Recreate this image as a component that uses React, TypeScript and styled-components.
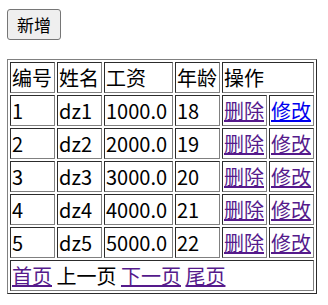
import React from 'react';
import styled, { createGlobalStyle } from 'styled-components';

const GlobalStyle = createGlobalStyle`
  body {
    margin: 0;
    background: #fff;
    font-family: "Noto Sans CJK SC", "Noto Sans", sans-serif;
    color: #000;
  }
`;

const Page = styled.div`
  padding: 9px 7px;
`;

const AddButton = styled.button`
  display: block;
  height: 31px;
  padding: 0 9px;
  font-family: "Noto Sans CJK SC", sans-serif;
  font-size: 17px;
  line-height: 22px;
  color: #000;
  background: #efefef;
  border: 1px solid #767676;
  border-radius: 3px;
`;

const Table = styled.table`
  margin-top: 19px;
  border: 1px outset gray;
  border-spacing: 2px;
  font-size: 20px;
  line-height: 27px;
`;

const Cell = styled.td<{ $w?: number }>`
  width: ${(p) => (p.$w ? `${p.$w}px` : 'auto')};
  padding: 1px;
  border: 1px inset gray;
  white-space: nowrap;
  vertical-align: middle;
`;

const Link = styled.a<{ $visited?: boolean }>`
  color: ${(p) => (p.$visited ? '#551a8b' : '#0000ee')};
  text-decoration: underline;
  cursor: pointer;
`;

const rows = [
  { id: 1, name: 'dz1', salary: '1000.0', age: 18 },
  { id: 2, name: 'dz2', salary: '2000.0', age: 19 },
  { id: 3, name: 'dz3', salary: '3000.0', age: 20 },
  { id: 4, name: 'dz4', salary: '4000.0', age: 21 },
  { id: 5, name: 'dz5', salary: '5000.0', age: 22 },
];

const App = () => (
  <Page>
    <GlobalStyle />
    <AddButton>新增</AddButton>
    <Table>
      <tbody>
        <tr>
          <Cell $w={41}>编号</Cell>
          <Cell $w={41}>姓名</Cell>
          <Cell $w={65}>工资</Cell>
          <Cell $w={41}>年龄</Cell>
          <Cell colSpan={2}>操作</Cell>
        </tr>
        {rows.map((r) => (
          <tr key={r.id}>
            <Cell>{r.id}</Cell>
            <Cell>{r.name}</Cell>
            <Cell>{r.salary}</Cell>
            <Cell>{r.age}</Cell>
            <Cell $w={41}>
              <Link $visited>删除</Link>
            </Cell>
            <Cell $w={41}>
              <Link $visited={r.id !== 1}>修改</Link>
            </Cell>
          </tr>
        ))}
        <tr>
          <Cell colSpan={6}>
            <Link $visited>首页</Link> 上一页 <Link $visited>下一页</Link>{' '}
            <Link $visited>尾页</Link>
          </Cell>
        </tr>
      </tbody>
    </Table>
  </Page>
);

export default App;
